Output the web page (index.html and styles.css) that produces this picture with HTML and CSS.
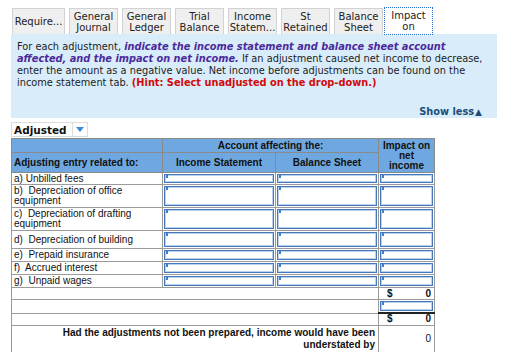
FILE: index.html
```html
<!DOCTYPE html>
<html lang="en">
<head>
    <meta charset="UTF-8">
    <title>Adjustments</title>
    <link rel="stylesheet" href="styles.css">
</head>
<body>
    <div class="page">
        <!-- Tabs -->
        <div class="tabs">
            <div class="tab first">Require...</div>
            <div class="tab">General<br>Journal</div>
            <div class="tab">General<br>Ledger</div>
            <div class="tab">Trial<br>Balance</div>
            <div class="tab">Income<br>Statem...</div>
            <div class="tab">St<br>Retained</div>
            <div class="tab">Balance<br>Sheet</div>
            <div class="tab active">Impact<br>on</div>
        </div>

        <!-- Instructions -->
        <div class="panel">
            <p>For each adjustment, <em class="key">indicate the income statement and balance sheet account affected, and the impact on net income.</em> If an adjustment caused net income to decrease, enter the amount as a negative value. Net income before adjustments can be found on the income statement tab. <strong class="hint">(Hint: Select unadjusted on the drop-down.)</strong></p>
            <div class="show-less">Show less<span class="arrow">▲</span></div>
        </div>

        <div class="select">
            <span class="select-label">Adjusted</span>
            <span class="select-btn"><span class="caret"></span></span>
        </div>

        <table class="grid">
            <colgroup>
                <col class="c1"><col class="c2"><col class="c3"><col class="c4">
            </colgroup>
            <tr class="h1">
                <th></th>
                <th colspan="2">Account affecting the:</th>
                <th rowspan="2" class="impact">Impact on<br>net<br>income</th>
            </tr>
            <tr class="h2">
                <th class="left">Adjusting entry related to:</th>
                <th>Income Statement</th>
                <th>Balance Sheet</th>
            </tr>
            <tr class="r-a">
                <td class="label">a) Unbilled fees</td>
                <td class="in"><div class="box"></div></td>
                <td class="in"><div class="box"></div></td>
                <td class="in"><div class="box"></div></td>
            </tr>
            <tr class="r-l">
                <td class="label">b)&nbsp; Depreciation of office equipment</td>
                <td class="in"><div class="box"></div></td>
                <td class="in"><div class="box"></div></td>
                <td class="in"><div class="box"></div></td>
            </tr>
            <tr class="r-l">
                <td class="label">c)&nbsp; Depreciation of drafting equipment</td>
                <td class="in"><div class="box"></div></td>
                <td class="in"><div class="box"></div></td>
                <td class="in"><div class="box"></div></td>
            </tr>
            <tr class="r-m">
                <td class="label mid">d)&nbsp; Depreciation of building</td>
                <td class="in"><div class="box"></div></td>
                <td class="in"><div class="box"></div></td>
                <td class="in"><div class="box"></div></td>
            </tr>
            <tr class="r-s">
                <td class="label">e)&nbsp; Prepaid insurance</td>
                <td class="in"><div class="box"></div></td>
                <td class="in"><div class="box"></div></td>
                <td class="in"><div class="box"></div></td>
            </tr>
            <tr class="r-s">
                <td class="label">f)&nbsp; Accrued interest</td>
                <td class="in"><div class="box"></div></td>
                <td class="in"><div class="box"></div></td>
                <td class="in"><div class="box"></div></td>
            </tr>
            <tr class="r-s">
                <td class="label">g)&nbsp; Unpaid wages</td>
                <td class="in"><div class="box"></div></td>
                <td class="in"><div class="box"></div></td>
                <td class="in"><div class="box"></div></td>
            </tr>
            <tr class="r-a">
                <td colspan="3"></td>
                <td class="amt"><div class="amt-in"><span>$</span><span>0</span></div></td>
            </tr>
            <tr class="r-s">
                <td colspan="3"></td>
                <td class="in"><div class="box"></div></td>
            </tr>
            <tr class="r-a">
                <td colspan="3"></td>
                <td class="amt total"><div class="amt-in"><span>$</span><span>0</span></div></td>
            </tr>
            <tr class="r-f">
                <td colspan="3" class="summary">Had the adjustments not been prepared, income would have been<br>understated by</td>
                <td class="num">0</td>
            </tr>
        </table>
    </div>
</body>
</html>
```

FILE: styles.css
```css
body {
    margin: 0;
    background: #fff;
    color: #222;
}

.page {
    padding: 8px 0 0 11px;
}

/* Tabs */
.tabs {
    display: flex;
    gap: 4px;
    padding-left: 1px;
    position: relative;
    z-index: 1;
}

.tab {
    width: 49px;
    height: 26px;
    box-sizing: border-box;
    background: #efefef;
    border: 1px solid #d2d2d2;
    border-bottom: none;
    font-family: "DejaVu Sans", Verdana, sans-serif;
    font-size: 10px;
    line-height: 11px;
    color: #222;
    text-align: center;
    display: flex;
    align-items: center;
    justify-content: center;
    white-space: nowrap;
}

.tab.first {
    width: 53px;
}

.tab.active {
    background: #fff;
    border: 1px dotted #2a6fc9;
    height: 28px;
    margin-top: -1px;
    margin-left: -3px;
    margin-bottom: -1px;
    position: relative;
}

/* Instructions panel */
.panel {
    width: 486px;
    box-sizing: border-box;
    background: #d9ecfa;
    padding: 7px 6px 0 6px;
    font-family: "DejaVu Sans", Verdana, sans-serif;
    font-size: 9.8px;
    line-height: 12px;
    color: #222;
}

.panel p {
    margin: 0 0 17px 0;
}

.key {
    color: #4b2a9a;
    font-weight: bold;
}

.hint {
    color: #d00a0a;
}

.show-less {
    text-align: right;
    font-weight: bold;
    color: #1c4d7c;
    padding-right: 9px;
}

.arrow {
    font-size: 9px;
    margin-left: 1px;
}

/* Dropdown */
.select {
    display: flex;
    width: fit-content;
    margin-top: 4px;
    border: 1px solid #dcdcdc;
    height: 15px;
    box-sizing: border-box;
    font-family: "DejaVu Sans", Verdana, sans-serif;
}

.select-label {
    font-weight: bold;
    font-size: 10.5px;
    line-height: 14px;
    padding: 0 5px 0 2px;
    color: #111;
}

.select-btn {
    width: 14px;
    border-left: 1px solid #dcdcdc;
    display: flex;
    align-items: center;
    justify-content: center;
}

.caret {
    width: 0;
    height: 0;
    border-left: 4px solid transparent;
    border-right: 4px solid transparent;
    border-top: 5px solid #3b8ad8;
}

/* Table */
.grid {
    border-collapse: collapse;
    table-layout: fixed;
    width: 423px;
    font-family: "Liberation Sans", Arial, sans-serif;
    font-size: 10px;
    color: #111;
    margin-top: 1px;
}

.c1 { width: 151px; }
.c2 { width: 113px; }
.c3 { width: 103px; }
.c4 { width: 56px; }

.grid th,
.grid td {
    border: 1px solid #9a9a9a;
    padding: 0;
    line-height: 10px;
}

.grid th {
    background: #6fa8e0;
    font-weight: bold;
    text-align: center;
    border-color: #8a8a8a;
}

.grid th.left {
    text-align: left;
    padding-left: 2px;
}

.grid th.impact {
    padding: 2px 0 0 0;
    vertical-align: top;
}

.h1 { height: 14px; }
.h2 { height: 20px; }
.r-a { height: 12px; }
.r-s { height: 13px; }
.r-m { height: 18px; }
.r-l { height: 23px; }
.r-f { height: 27px; }

.grid td.label {
    padding-left: 2px;
    vertical-align: top;
    padding-top: 1px;
}

.grid td.label.mid {
    vertical-align: middle;
}

.grid td.in {
    padding: 1px;
    vertical-align: top;
}

.box {
    position: relative;
    box-sizing: border-box;
    border: 1px solid #4677b8;
    box-shadow: inset 0 0 0 1px #b9d3ef;
    background: #fff;
    height: 10px;
}

.r-a .box { height: 9px; }
.r-l .box { height: 20px; }
.r-m .box { height: 15px; }

.box::before {
    content: "";
    position: absolute;
    left: 1px;
    top: 0;
    width: 2px;
    height: 3px;
    background: #3f7fd0;
}

.grid td.amt {
    font-weight: bold;
    padding: 0 3px 0 8px;
}

.amt-in {
    display: flex;
    justify-content: space-between;
}

.grid td.total {
    border-top: 2px solid #222;
}

.grid td.summary {
    font-weight: bold;
    text-align: right;
    padding-right: 3px;
    line-height: 12px;
}

.grid td.num {
    text-align: right;
    padding-right: 3px;
}
```
